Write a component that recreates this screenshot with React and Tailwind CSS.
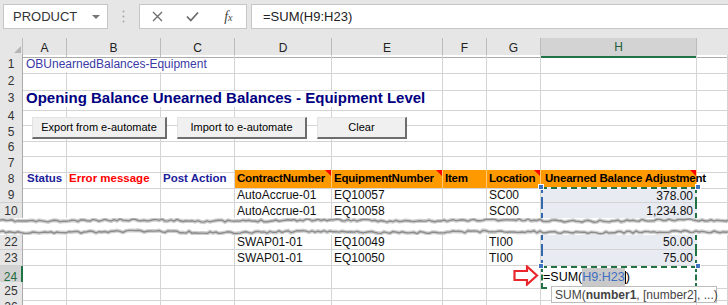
import React from "react";

const GRID = "grid grid-cols-[23px_44px_94px_74px_97px_111px_44px_54px_156px_31px]";
const GL = "border-r border-b border-[#d4d4d4]";
const ORANGE = "relative bg-[#ff9900] border-r border-b border-r-[#ffc875] border-b-[#d4d4d4] font-bold text-[11.5px] tracking-[-0.2px] text-black pl-[2px]";
const RANGE = "relative bg-[#e8ebf1] border-l-2 border-r-2 border-dashed border-l-[#3468ad] border-r-[#217346] shadow-[inset_0_-1px_0_#d4d4d4] justify-end pr-[2px]";

function jag(base, seed) {
  let s = seed;
  const r = () => {
    s = (s * 16807) % 2147483647;
    return s / 2147483647;
  };
  let d = `M-2 ${base}`;
  for (let x = 3; x <= 734; x += 3) {
    const y = base + Math.sin(x / 29) * 0.7 + (r() - 0.5) * 2.2;
    d += ` L${x} ${y.toFixed(1)}`;
  }
  return d;
}
const TEAR_TOP = jag(2.5, 11);
const TEAR_BOT = jag(14, 97);

function Cell({ className = GL, children }) {
  return <div className={"flex items-center whitespace-nowrap " + className}>{children}</div>;
}

function RowNum({ n, active }) {
  return active ? (
    <div className="flex items-center justify-center bg-[#d2d2d2] text-[#1e6b41] text-[12px] border-r-2 border-b border-r-[#217346] border-b-[#c8c8c8]">
      {n}
    </div>
  ) : (
    <div className="flex items-center justify-center bg-[#e6e6e6] text-[#333] text-[12px] border-r border-b border-r-[#ababab] border-b-[#cfcfcf]">
      {n}
    </div>
  );
}

function Note() {
  return <span className="absolute top-0 right-0 w-0 h-0 border-l-[6px] border-l-transparent border-t-[6px] border-t-[#ff0000]" />;
}

function Blank({ count = 9 }) {
  return Array.from({ length: count }, (_, i) => <Cell key={i} />);
}

function DataRow({ n, d, e, g, h, top }) {
  return (
    <div className={GRID + " h-[16px] text-[12px] leading-[14px] text-[#111]"}>
      <RowNum n={n} />
      <Cell />
      <Cell />
      <Cell />
      <Cell className={GL + " pl-[2px]"}>{d}</Cell>
      <Cell className={GL + " pl-[2px]"}>{e}</Cell>
      <Cell />
      <Cell className={GL + " pl-[2px]"}>{g}</Cell>
      <Cell className={RANGE + (top ? " border-t-2 border-t-[#217346]" : "")}>
        {top && (
          <>
            <span className="absolute left-[-5px] top-[-5px] w-[6px] h-[6px] bg-[#3f73c2] border border-white" />
            <span className="absolute right-[-6px] top-[-5px] w-[6px] h-[6px] bg-[#3f73c2] border border-white" />
          </>
        )}
        {h}
      </Cell>
      <Cell />
    </div>
  );
}

function Btn({ left, width, children }) {
  return (
    <div
      className={`absolute top-[79px] ${left} ${width} h-[22px] flex items-center justify-center bg-[#f0f0f0] text-[11px] text-black border-t border-l border-t-[#e3e3e3] border-l-[#e3e3e3] border-r-2 border-b-2 border-r-[#6d6d6d] border-b-[#6d6d6d]`}
    >
      {children}
    </div>
  );
}

export default function App() {
  return (
    <div className="w-[728px] h-[305px] overflow-hidden bg-white font-['Liberation_Sans',Arial,sans-serif]">
      {/* formula bar */}
      <div className="h-[38px] bg-[#e6e6e6] flex items-start pt-[4px] pl-[3px]">
        <div className="w-[105px] h-[25px] bg-white border border-[#c6c6c6] flex items-center justify-between pl-[9px] pr-[7px] text-[13px] text-[#333]">
          <span>PRODUCT</span>
          <span className="w-0 h-0 border-l-[4px] border-r-[4px] border-t-[4px] border-l-transparent border-r-transparent border-t-[#777]" />
        </div>
        <div className="w-[31px] h-[25px] flex items-center justify-center">
          <svg width="3" height="13" viewBox="0 0 3 13">
            <circle cx="1.5" cy="1.5" r="1" fill="#aaa" />
            <circle cx="1.5" cy="6.5" r="1" fill="#aaa" />
            <circle cx="1.5" cy="11.5" r="1" fill="#aaa" />
          </svg>
        </div>
        <div className="w-[108px] h-[25px] bg-white border border-[#c6c6c6] flex items-center">
          <div className="w-[36px] flex justify-center">
            <svg width="11" height="11" viewBox="0 0 11 11">
              <path d="M1 1 L10 10 M10 1 L1 10" stroke="#6b6b6b" strokeWidth="1.3" />
            </svg>
          </div>
          <div className="w-[36px] flex justify-center">
            <svg width="13" height="11" viewBox="0 0 13 11">
              <path d="M1 5.5 L4.8 9.5 L12 1.5" stroke="#6b6b6b" strokeWidth="1.8" fill="none" />
            </svg>
          </div>
          <div className="w-[36px] flex justify-center items-baseline font-['Liberation_Serif',serif] italic text-[#444]">
            <span className="text-[14px]">f</span>
            <span className="text-[10px]">x</span>
          </div>
        </div>
        <div className="ml-[4px] flex-1 h-[25px] bg-white border-t border-b border-l border-[#c6c6c6] flex items-center pl-[11px] text-[13px] text-[#222]">
          =SUM(H9:H23)
        </div>
      </div>

      {/* sheet */}
      <div className="relative">
        <div className={GRID + " h-[17px] bg-[#e6e6e6] text-[12px] text-[#222]"}>
          <div className="flex items-end justify-end pr-[1px] pb-[4px] border-r border-b border-r-[#bcbcbc] border-b-[#ababab]">
            <svg width="7" height="7" viewBox="0 0 7 7">
              <path d="M7 0 L7 7 L0 7 Z" fill="#b5b5b5" />
            </svg>
          </div>
          {["A", "B", "C", "D", "E", "F", "G"].map((c) => (
            <div key={c} className="flex items-center justify-center border-r border-b border-r-[#bcbcbc] border-b-[#ababab]">
              {c}
            </div>
          ))}
          <div className="flex items-center justify-center bg-[#d3d3d3] text-[#1e5e3b] border-r border-b-2 border-r-[#bcbcbc] border-b-[#217346]">
            H
          </div>
          <div className="border-b border-b-[#ababab]" />
        </div>

        <div className={GRID + " h-[17px]"}>
          <RowNum n={1} />
          <Cell className={GL + " col-span-3 pl-[3px] text-[12px] text-[#3a3aa6]"}>OBUnearnedBalances-Equipment</Cell>
          <Blank count={6} />
        </div>
        <div className={GRID + " h-[15px]"}>
          <RowNum n={2} />
          <Blank />
        </div>
        <div className={GRID + " h-[20px]"}>
          <RowNum n={3} />
          <Cell className={GL + " col-span-5 pl-[3px] text-[15px] font-bold text-[#000080]"}>
            Opening Balance Unearned Balances - Equipment Level
          </Cell>
          <Blank count={4} />
        </div>
        <div className={GRID + " h-[16px]"}>
          <RowNum n={4} />
          <Blank />
        </div>
        <div className={GRID + " h-[15px]"}>
          <RowNum n={5} />
          <Blank />
        </div>
        <div className={GRID + " h-[16px]"}>
          <RowNum n={6} />
          <Blank />
        </div>
        <div className={GRID + " h-[16px]"}>
          <RowNum n={7} />
          <Blank />
        </div>

        <div className={GRID + " h-[17px]"}>
          <RowNum n={8} />
          <Cell className={GL + " pl-[4px] text-[11.5px] font-bold text-[#20209a]"}>Status</Cell>
          <Cell className={GL + " pl-[2px] text-[11.5px] font-bold text-[#ff0000]"}>Error message</Cell>
          <Cell className={GL + " pl-[2px] text-[11.5px] font-bold text-[#20209a]"}>Post Action</Cell>
          <Cell className={ORANGE}>ContractNumber<Note /></Cell>
          <Cell className={ORANGE}>EquipmentNumber<Note /></Cell>
          <Cell className={ORANGE}>Item</Cell>
          <Cell className={ORANGE}>Location<Note /></Cell>
          <Cell className={ORANGE + " pl-[4px]"}>Unearned Balance Adjustment<Note /></Cell>
          <Cell />
        </div>

        <DataRow n={9} d="AutoAccrue-01" e="EQ10057" g="SC00" h="378.00" top />
        <div className="h-[15px] overflow-hidden">
          <DataRow n={10} d="AutoAccrue-01" e="EQ10058" g="SC00" h="1,234.80" />
        </div>

        {/* torn break */}
        <div className="h-[17px] bg-white">
          <svg width="728" height="17" viewBox="0 0 728 17" className="block">
            <path d={TEAR_TOP} stroke="#cfcfcf" strokeWidth="4" fill="none" />
            <path d={TEAR_TOP} stroke="#8c8c8c" strokeWidth="1.4" fill="none" />
            <path d={TEAR_BOT} stroke="#cfcfcf" strokeWidth="4" fill="none" />
            <path d={TEAR_BOT} stroke="#8c8c8c" strokeWidth="1.4" fill="none" />
          </svg>
        </div>

        <div className="h-[15px] overflow-hidden flex flex-col justify-end">
          <div className="shrink-0">
            <DataRow n={22} d="SWAP01-01" e="EQ10049" g="TI00" h="50.00" />
          </div>
        </div>
        <DataRow n={23} d="SWAP01-01" e="EQ10050" g="TI00" h="75.00" />

        <div className={GRID + " h-[16px]"}>
          <RowNum n={24} active />
          <Blank count={7} />
          <div className="relative z-10 bg-white border-2 border-dashed border-[#217346] flex items-center whitespace-nowrap text-[12.5px] text-black">
            <span className="absolute left-[-5px] top-[-5px] w-[6px] h-[6px] bg-[#3f73c2] border border-white" />
            <span className="absolute right-[-6px] top-[-5px] w-[6px] h-[6px] bg-[#3f73c2] border border-white" />
            <svg className="absolute left-[-30px] top-[-3px]" width="26" height="21" viewBox="0 0 26 21">
              <path d="M1.5 6 H14 V1.5 L24 10.5 L14 19.5 V15 H1.5 Z" stroke="#e8262b" strokeWidth="2.2" fill="white" />
            </svg>
            <span>=SUM(</span>
            <span className="bg-[#c9c9c9] text-[#3f6fc0]">H9:H23</span>
            <span className="border-l border-black h-[13px]" />
            <span>)</span>
            <div className="absolute left-[8px] top-[18px] w-[166px] h-[17px] bg-white border border-[#bdbdbd] flex items-center pl-[3px] text-[12px] text-[#444] z-20">
              SUM(<b>number1</b>, [number2], ...)
            </div>
          </div>
          <Cell />
        </div>
        <div className={GRID + " h-[16px]"}>
          <RowNum n={25} />
          <Blank />
        </div>
        <div className={GRID + " h-[16px]"}>
          <RowNum n={26} />
          <Blank />
        </div>

        <Btn left="left-[32px]" width="w-[135px]">Export from e-automate</Btn>
        <Btn left="left-[177px]" width="w-[130px]">Import to e-automate</Btn>
        <Btn left="left-[317px]" width="w-[90px]">Clear</Btn>
      </div>
    </div>
  );
}
